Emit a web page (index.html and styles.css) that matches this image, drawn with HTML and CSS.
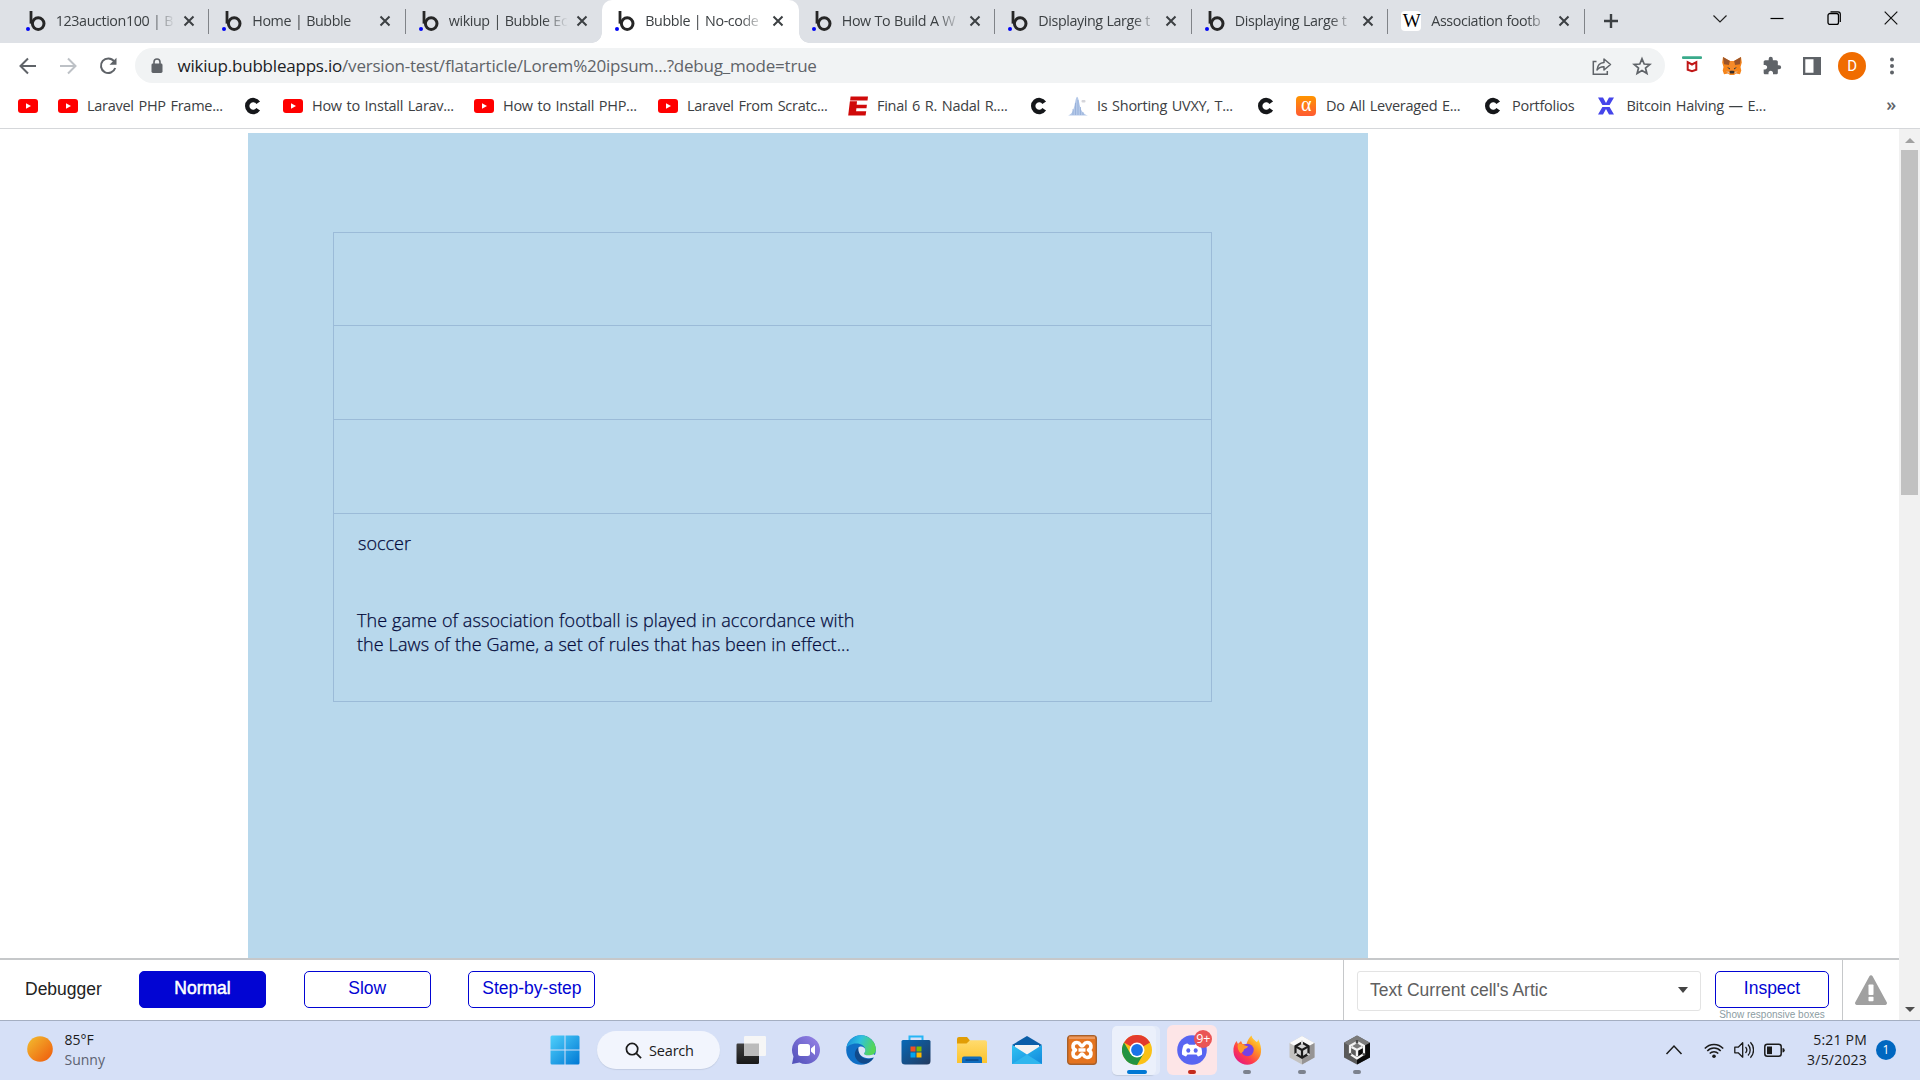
FILE: index.html
```html
<!DOCTYPE html>
<html lang="en">
<head>
<meta charset="utf-8">
<title>Bubble | No-code apps</title>
<link rel="stylesheet" href="styles.css">
</head>
<body>
<svg class="defs" width="0" height="0" aria-hidden="true">
  <defs>
    <symbol id="bubble" viewBox="0 0 20 20"><circle cx="12.2" cy="12.6" r="5.8" fill="none" stroke="#262626" stroke-width="3"/><path d="M5 0v12.6" stroke="#262626" stroke-width="2.8"/><circle cx="2" cy="18" r="2" fill="#0205f5"/></symbol>
    <symbol id="x" viewBox="0 0 12 12"><path d="M1.5 1.5l9 9M10.5 1.5l-9 9" stroke="#3c4043" stroke-width="2"/></symbol>
    <symbol id="yt" viewBox="0 0 20 20"><rect y="3" width="20" height="14" rx="3" fill="#f00"/><path d="M8 7.2v5.6l5-2.8z" fill="#fff"/></symbol>
    <symbol id="c" viewBox="0 0 20 20"><path d="M15.2 6.7A6 6 0 1 0 15.2 13.3" fill="none" stroke="#15171a" stroke-width="4.4"/></symbol>
    <linearGradient id="gwin" x2="1" y2="1"><stop stop-color="#4fd0fb"/><stop offset="1" stop-color="#0078d4"/></linearGradient>
    <linearGradient id="gsun" x2="1" y2="1"><stop stop-color="#f2bf30"/><stop offset=".75" stop-color="#f07114"/><stop offset="1" stop-color="#ee5a0c"/></linearGradient>
    <linearGradient id="gtv" x2="0" y2="1"><stop stop-color="#404040"/><stop offset="1" stop-color="#181818"/></linearGradient>
    <linearGradient id="gchat" x1="1" x2="0" y2="1"><stop stop-color="#9a85e8"/><stop offset="1" stop-color="#4e4fb8"/></linearGradient>
    <linearGradient id="gedge" x2="1" y2=".3"><stop stop-color="#1583dc"/><stop offset=".5" stop-color="#2fc1df"/><stop offset="1" stop-color="#55d658"/></linearGradient>
    <linearGradient id="gstore" x2="1" y2="1"><stop stop-color="#0669b8"/><stop offset="1" stop-color="#243a5e"/></linearGradient>
    <linearGradient id="gfold" x2="0" y2="1"><stop stop-color="#ffdb6e"/><stop offset="1" stop-color="#fcc32c"/></linearGradient>
    <linearGradient id="gmail" x2="1" y2="1"><stop stop-color="#31c3f3"/><stop offset="1" stop-color="#1289dc"/></linearGradient>
    <linearGradient id="gfox" x1="1" x2=".2" y2="1"><stop stop-color="#fff44f"/><stop offset=".35" stop-color="#ffa023"/><stop offset=".7" stop-color="#ff3d4a"/><stop offset="1" stop-color="#e31587"/></linearGradient>
  </defs>
</svg>

<header class="tabstrip">
  <div class="tab"><svg class="fav"><use href="#bubble"/></svg><span class="title">123auction100 | B</span><svg class="close"><use href="#x"/></svg></div>
  <div class="tab"><svg class="fav"><use href="#bubble"/></svg><span class="title">Home | Bubble</span><svg class="close"><use href="#x"/></svg></div>
  <div class="tab no-sep"><svg class="fav"><use href="#bubble"/></svg><span class="title">wikiup | Bubble Ec</span><svg class="close"><use href="#x"/></svg></div>
  <div class="tab active"><svg class="fav"><use href="#bubble"/></svg><span class="title">Bubble | No-code</span><svg class="close"><use href="#x"/></svg></div>
  <div class="tab"><svg class="fav"><use href="#bubble"/></svg><span class="title">How To Build A W</span><svg class="close"><use href="#x"/></svg></div>
  <div class="tab"><svg class="fav"><use href="#bubble"/></svg><span class="title">Displaying Large t</span><svg class="close"><use href="#x"/></svg></div>
  <div class="tab"><svg class="fav"><use href="#bubble"/></svg><span class="title">Displaying Large t</span><svg class="close"><use href="#x"/></svg></div>
  <div class="tab"><span class="fav wiki">W</span><span class="title">Association footb</span><svg class="close"><use href="#x"/></svg></div>
  <svg class="newtab" viewBox="0 0 16 16"><path d="M8 1v14M1 8h14" stroke="#3c4043" stroke-width="2.4"/></svg>
  <div class="wincontrols">
    <svg viewBox="0 0 14 14"><path d="M.5 4.5L7 11l6.500-6.500" fill="none" stroke="#222" stroke-width="1.2"/></svg>
    <svg viewBox="0 0 14 14"><path d="M.5 7.500h13" stroke="#000" stroke-width="1.2"/></svg>
    <svg viewBox="0 0 14 14"><rect x="1" y="2.500" width="10.500" height="11" rx="2" fill="none" stroke="#000" stroke-width="1.3"/><path d="M3.500 .8H11a2.300 2.300 0 0 1 2.300 2.300V11" fill="none" stroke="#000" stroke-width="1.200"/></svg>
    <svg viewBox="0 0 14 14"><path d="M.7.7l12.600 12.600M13.300.7L.7 13.300" stroke="#111" stroke-width="1.200"/></svg>
  </div>
</header>

<div class="toolbar">
  <svg class="nav" viewBox="0 0 18 18"><path d="M17 9H2M9 1.500L1.500 9 9 16.500" fill="none" stroke="#5f6368" stroke-width="2"/></svg>
  <svg class="nav" viewBox="0 0 18 18"><path d="M1 9h15M9 1.500L16.500 9 9 16.500" fill="none" stroke="#bdc1c6" stroke-width="2"/></svg>
  <svg class="nav" viewBox="0 0 18 18"><path d="M15 4.200A7.300 7.300 0 1 0 16.200 11" fill="none" stroke="#5f6368" stroke-width="2"/><path d="M17.500.8v7h-7z" fill="#5f6368"/></svg>
  <div class="omnibox">
    <svg class="lock" viewBox="0 0 12 16"><rect x=".5" y="5.500" width="11" height="9.500" rx="1.400" fill="#5f6368"/><path d="M3 6V4a3 3 0 0 1 6 0v2" fill="none" stroke="#5f6368" stroke-width="1.600"/></svg>
    <span class="url"><b>wikiup.bubbleapps.io</b>/version-test/flatarticle/Lorem%20ipsum...?debug_mode=true</span>
    <svg class="obi" viewBox="0 0 20 20"><path d="M4.500 5.500H1.300v12.700h14V15" fill="none" stroke="#5f6368" stroke-width="1.500"/><path d="M5 14c.5-5 3-7.300 7-7.500V3l6.500 5.500L12 14v-3.300c-3-.1-5.200.8-7 3.300z" fill="none" stroke="#5f6368" stroke-width="1.500" stroke-linejoin="round"/></svg>
    <svg class="obi" viewBox="0 0 20 20"><path d="M10 2.800l2.200 5.200 5.600.4-4.300 3.600 1.400 5.500L10 14.500l-4.900 3 1.400-5.500-4.300-3.600L7.800 8z" fill="none" stroke="#5f6368" stroke-width="1.700"/></svg>
  </div>
  <div class="exts">
    <svg viewBox="0 0 20 20"><rect width="20" height="2.800" y=".2" rx="1" fill="#3aaa8b"/><path d="M5.700 6.200L10 8.500l4.300-2.300v7.600L10 15.300l-4.300-1.500z" fill="none" stroke="#c01818" stroke-width="2"/></svg>
    <svg viewBox="0 0 20 20"><path d="M1 1l7 4h4l7-4 .8 5.500L18.500 11l.8 3.500-1.300 3.800-4-.9-2 1.600H8l-2-1.600-4 .9-1.300-3.800.8-3.500L.2 6.500z" fill="#f6851b"/><path d="M1 1l7 4-1 4-5-.8zM19 1l-7 4 1 4 5-.8z" fill="#9b5429"/><path d="M8 5h4l1 6-1 4H8l-1-4z" fill="#f58b2b"/><path d="M5 11l3 1.200-.4 1.300zM15 11l-3 1.200.4 1.300z" fill="#233447"/><path d="M7.500 15.500l1-.8h3l1 .8-.7 2H8.200z" fill="#39302c"/><path d="M4 15.500l3 .2.500 2zM16 15.500l-3 .2-.5 2z" fill="#d7c1b3"/></svg>
    <svg viewBox="0 0 24 24"><path fill="#5f6368" d="M20.500 11H19V7c0-1.100-.9-2-2-2h-4V3.500a2.500 2.500 0 0 0-5 0V5H4c-1.100 0-1.990.9-1.990 2v3.800H3.500c1.490 0 2.700 1.210 2.700 2.700s-1.210 2.700-2.700 2.700H2V20c0 1.100.9 2 2 2h3.800v-1.500c0-1.490 1.210-2.700 2.700-2.700s2.700 1.210 2.700 2.700V22H17c1.100 0 2-.9 2-2v-4h1.500a2.500 2.500 0 0 0 0-5z"/></svg>
    <svg viewBox="0 0 20 20"><path fill="#5f6368" fill-rule="evenodd" d="M1 1h18v18H1zM3.300 3.300v13.400h8.200V3.300z"/></svg>
    <span class="avatar">D</span>
    <svg viewBox="0 0 20 20"><circle cx="10" cy="3.500" r="2" fill="#5f6368"/><circle cx="10" cy="10" r="2" fill="#5f6368"/><circle cx="10" cy="16.500" r="2" fill="#5f6368"/></svg>
  </div>
</div>

<nav class="bookmarks">
  <div class="bm"><svg><use href="#yt"/></svg></div>
  <div class="bm"><svg><use href="#yt"/></svg><span>Laravel PHP Frame...</span></div>
  <div class="bm"><svg><use href="#c"/></svg></div>
  <div class="bm"><svg><use href="#yt"/></svg><span>How to Install Larav...</span></div>
  <div class="bm"><svg><use href="#yt"/></svg><span>How to Install PHP...</span></div>
  <div class="bm"><svg><use href="#yt"/></svg><span>Laravel From Scratc...</span></div>
  <div class="bm"><svg viewBox="0 0 20 20"><path d="M2.600.5H20l-.5 4H2.100zM1.900 5.300H9l-.3 3.500h10.200l-.4 3.500H8.400l-.3 2.900h10.100l-.6 4.300H.2z" fill="#d00a0a"/></svg><span>Final 6 R. Nadal R....</span></div>
  <div class="bm"><svg><use href="#c"/></svg></div>
  <div class="bm"><svg viewBox="0 0 20 20"><path d="M0 19.500c3.500-1 5-4 6.500-10C7.300 5.500 8 1.500 9 .8c1.200 0 2 5 3 9.500 1.200 5 3.500 8 8 9.200z" fill="#b4c8e8"/><path d="M5 13v6M7.500 7v12M10 4v15M12.500 11v8M15 16v3" stroke="#8ea9d6" stroke-width=".7"/><rect x="13.500" y="4" width="4" height="2.500" rx="1" fill="#d5d5da"/></svg><span>Is Shorting UVXY, T...</span></div>
  <div class="bm"><svg><use href="#c"/></svg></div>
  <div class="bm wide"><span class="alpha">α</span><span>Do All Leveraged E...</span></div>
  <div class="bm"><svg><use href="#c"/></svg><span>Portfolios</span></div>
  <div class="bm last"><svg viewBox="0 0 20 20"><path d="M2 1.500h5L10 7l3-5.500h5L13.600 9H6.400zM2 18.500h5L10 13l3 5.500h5L13.600 11H6.400z" fill="#4545ea"/></svg><span>Bitcoin Halving — E...</span></div>
  <span class="more">»</span>
</nav>

<main class="viewport">
  <div class="page">
    <div class="canvas">
      <div class="group">
        <div class="cell"></div>
        <div class="cell"></div>
        <div class="cell"></div>
        <div class="cell article">
          <div class="name">soccer</div>
          <div class="body">The game of association football is played in accordance with<br>the Laws of the Game, a set of rules that has been in effect...</div>
        </div>
      </div>
    </div>
    <footer class="debugger">
      <span class="label">Debugger</span>
      <button class="btn on">Normal</button>
      <button class="btn">Slow</button>
      <button class="btn">Step-by-step</button>
      <div class="inspector">
        <div class="select"><span>Text Current cell's Artic</span><i></i></div>
        <div class="inspect"><button class="btn">Inspect</button><small>Show responsive boxes</small></div>
      </div>
      <div class="warn"><svg viewBox="0 0 32 30"><path d="M14.400 1.200a1.900 1.900 0 0 1 3.200 0L31.600 27a1.900 1.900 0 0 1-1.600 3H2a1.900 1.900 0 0 1-1.600-3z" fill="#a0a0a0"/><rect x="13.500" y="9.500" width="5" height="10.500" rx=".8" fill="#fff"/><rect x="13.500" y="21.800" width="5" height="4.400" rx=".8" fill="#fff"/></svg></div>
    </footer>
  </div>
  <div class="scrollbar"><i class="up"></i><div class="thumb"></div><i class="down"></i></div>
</main>

<footer class="taskbar">
  <div class="weather">
    <svg viewBox="0 0 26 26"><circle cx="13" cy="13" r="12.800" fill="url(#gsun)"/></svg>
    <div>85°F<br><span class="dim">Sunny</span></div>
  </div>
  <div class="apps">
    <div class="app first"><svg viewBox="0 0 30 30"><path d="M.5 2q0-1.500 1.500-1.500h12.500v14H.5zM15.500.5H28q1.500 0 1.500 1.500v12.500h-14zM.5 15.500h14v14H2q-1.500 0-1.500-1.500zM15.500 15.500h14V28q0 1.500-1.500 1.500H15.500z" fill="url(#gwin)"/></svg></div>
    <div class="search"><svg viewBox="0 0 18 18"><circle cx="7.500" cy="7.500" r="6" fill="none" stroke="#1b1b1b" stroke-width="1.800"/><path d="M12 12l5 5" stroke="#1b1b1b" stroke-width="1.900"/></svg><span>Search</span></div>
    <div class="app"><svg viewBox="0 0 30 30"><rect x=".5" y="8.500" width="22.500" height="20.500" rx="1.200" fill="url(#gtv)"/><rect x="8" y="1" width="22" height="20" rx="1.200" fill="#f6f6f6"/><rect x="8" y="8.500" width="15" height="12.500" fill="#bbb"/></svg></div>
    <div class="app"><svg viewBox="0 0 30 30"><path d="M15 1a14 14 0 1 1-6.500 26.400L1 29l1.500-7.600A14 14 0 0 1 15 1z" fill="url(#gchat)"/><rect x="7" y="9" width="12" height="12" rx="2.500" fill="#fff"/><path d="M20 13.500l4-3.500v10l-4-3.500z" fill="#fff"/></svg></div>
    <div class="app"><svg viewBox="0 0 30 30"><circle cx="15" cy="15" r="14.800" fill="#0f6fc6"/><path d="M.3 13A14.900 14.900 0 0 1 29.900 14c.3 4-3 6.800-7.500 6.800-3 0-4.400-1-4.400-2 0-.8 1.300-1.500 1.300-3.800C19.300 11 15 8.500 10.500 8.500 5 8.500 1.500 11 .3 13z" fill="url(#gedge)"/><path d="M12.500 12.300c-3.500 2.500-4.700 7-2.700 11 2.200 4.300 7 6.500 11.200 5 3-1.200 5.200-3 6.700-5.500-7 3-15.500 1-15.200-10.500z" fill="#114a8b"/><path d="M12.500 12.500c-1 7 4.500 11.500 11 10.800 2.500-.2 4.200-1 5-1l1.800-2-3-1c-2 1-8.300 1.800-9.300-.5.200-1 1.300-1.500 1.300-3.800 0-3.200-5-4.800-6.800-2.500z" fill="#dbe4f7"/></svg></div>
    <div class="app"><svg viewBox="0 0 30 30"><path d="M8.500 7V1.500h13V7" fill="none" stroke="#27b5f5" stroke-width="2"/><path d="M.5 6.500q0-1.500 1.500-1.500h26q1.500 0 1.500 1.500V26a3.500 3.500 0 0 1-3.500 3.500H4A3.500 3.500 0 0 1 .5 26z" fill="url(#gstore)"/><path d="M9.500 11.500h5v5h-5z" fill="#f25022"/><path d="M15.500 11.500h5v5h-5z" fill="#7fba00"/><path d="M9.500 17.500h5v5h-5z" fill="#00a4ef"/><path d="M15.500 17.500h5v5h-5z" fill="#ffb900"/></svg></div>
    <div class="app"><svg viewBox="0 0 30 30"><path d="M0 4q0-2 2-2h8l3 3.500V12H0z" fill="#e19d05"/><path d="M0 8.500h9.500L13 5.200h15q2 0 2 2V28H0z" fill="url(#gfold)"/><path d="M5 28v-4.500Q5 21.500 7 21.500h16q2 0 2 2V28z" fill="#0f6cbd"/><path d="M8.500 25h13" stroke="#0a3f78" stroke-width="1.200"/></svg></div>
    <div class="app"><svg viewBox="0 0 30 30"><path d="M0 10L15 1l15 9-15 9z" fill="#0b5ea8"/><path d="M3 10h24v7L15 22 3 17z" fill="#f3f3f3"/><path d="M0 10l15 9.500L30 10v19H0z" fill="url(#gmail)"/><path d="M15 19.500L30 29H0z" fill="#2fb6ee"/></svg></div>
    <div class="app"><svg viewBox="0 0 30 30"><rect x=".7" y=".7" width="28.600" height="28.600" rx="3" fill="#e4731f" stroke="#a9602a" stroke-width="1.400"/><path d="M2 1.500h26V4H2z" fill="#f0a878" opacity=".7"/><path d="M10 7.500c-5 0-5 6-1.500 7.500C5 16.500 5 22.500 10 22.500c3.500 0 3-3.500 5-3.500s1.500 3.500 5 3.500c5 0 5-6 1.500-7.500 3.500-1.500 3.500-7.500-1.500-7.500-3.500 0-3 3.500-5 3.500s-1.500-3.500-5-3.500zM11.500 15h7" fill="none" stroke="#fff" stroke-width="3.600" stroke-linejoin="round"/></svg></div>
    <div class="app current"><svg viewBox="0 0 30 30"><circle cx="15" cy="15" r="15" fill="#fbc116"/><path d="M15 15L2 7.500A15 15 0 0 1 28 7.500z" fill="#e33b2e"/><path d="M2 7.500A15 15 0 0 0 15 30l6.500-11.300L15 15 8.500 18.800z" fill="#229342"/><path d="M28 7.500H15v4z" fill="#e33b2e"/><circle cx="15" cy="15" r="7.500" fill="#fff"/><circle cx="15" cy="15" r="5.900" fill="#1a73e8"/></svg><i></i></div>
    <div class="app alert"><svg viewBox="0 0 30 30"><circle cx="15" cy="15" r="14.800" fill="#5865f2"/><path d="M10.500 8.500l1.700 1.200h5.600l1.700-1.200c2 .4 3 1 3.800 1.600 1.500 3.500 2 6.500 1.700 9.500-1.500 1.100-3 1.700-4 1.900l-1.500-1.900h-9L9 21.500c-1-.2-2.500-.8-4-1.900-.3-3 .2-6 1.700-9.500.8-.6 1.800-1.200 3.800-1.600z" fill="#fff"/><ellipse cx="11.300" cy="15.500" rx="2" ry="2.200" fill="#5865f2"/><ellipse cx="18.700" cy="15.500" rx="2" ry="2.200" fill="#5865f2"/></svg><b>9+</b><i></i></div>
    <div class="app run"><svg viewBox="0 0 30 30"><path d="M1.500 17C1 12 2.500 9 4.500 6l1.500 3 3-3 1.500 3h4c1-4 3-6.500 5-8.500.5 3 2.500 4 5 6.500 1.500-.5 1.500-1.500 1.500-3C28.500 9 29.500 13 29 17a13.800 13.800 0 0 1-27.500 0z" fill="url(#gfox)"/><circle cx="15.500" cy="15" r="6.200" fill="#7542e5"/><path d="M6 9c3-1 5 .5 7 1.500l3 .8c-.5 2-3 2.200-4 3.200-.8 3-2 2.500-3 4C6 16 5 12 6 9z" fill="#ff9a2a"/></svg><i></i></div>
    <div class="app run"><svg viewBox="0 0 30 30"><path d="M15 1l12.500 7v14.500L15 29.500 2.500 22.500V8z" fill="#c3c2c0"/><path d="M15 1l12.500 7L15 15 2.500 8z" fill="#fafafa"/><path d="M27.500 8v14.500L15 29.500V15z" fill="#969494"/><path d="M15 7.500l6.500 3.700v7.600L15 22.700l-6.500-3.900v-7.600z" fill="#d5d5d5" stroke="#1c1c1c" stroke-width="2.200"/><path d="M15 15v7M15 15l-6-3.400M15 15l6-3.400" stroke="#1c1c1c" stroke-width="2.200"/><path d="M15 5.500v3.500M7.500 20l2.300-1.400M22.500 20l-2.300-1.400" stroke="#d5d5d5" stroke-width="2"/></svg><i></i></div>
    <div class="app run"><svg viewBox="0 0 30 30"><path d="M15 .5l13 7.300v14.700L15 29.500 2 22.500V7.800z" fill="#5a5a5a"/><path d="M15 .5l13 7.300L15 15 2 7.800z" fill="#7a7a7a"/><path d="M28 7.800v14.700L15 29.500V15z" fill="#0a0a0a"/><path d="M15 7l7 4v8L15 23.500 8 19v-8z" fill="none" stroke="#f4f4f4" stroke-width="2.200"/><path d="M15 15v6.500M15 15l-5.500-3M15 15l5.500-3" stroke="#f4f4f4" stroke-width="2.400"/><path d="M15 5v3.500M7 20l2-1.200M23 20l-2-1.200" stroke="#4a4a4a" stroke-width="2.400"/></svg><i></i></div>
  </div>
  <div class="tray">
    <svg class="chev" viewBox="0 0 18 20"><path d="M1.500 14L9 6l7.500 8" fill="none" stroke="#1b1b1b" stroke-width="1.500"/></svg>
    <svg class="wifi" viewBox="0 0 20 20"><g fill="none" stroke="#1b1b1b" stroke-width="1.500"><path d="M.8 8.500a12.500 12.500 0 0 1 18.400 0M3.300 11a9 9 0 0 1 13.400 0M5.700 13.600a6 6 0 0 1 8.600 0"/></g><circle cx="10" cy="16.200" r="1.800" fill="#1b1b1b"/></svg>
    <svg class="vol" viewBox="0 0 20 20"><g fill="none" stroke="#1b1b1b" stroke-width="1.300" stroke-linejoin="round"><path d="M.8 7.200h3.400l4.500-4.400v14.400l-4.500-4.400H.8z"/><path d="M11.500 7a4.500 4.500 0 0 1 0 6M14 4.500a8 8 0 0 1 0 11M16.400 2.300a11 11 0 0 1 0 15.400"/></g></svg>
    <svg class="bat" viewBox="0 0 21 20"><rect x=".8" y="4.300" width="16.400" height="12" rx="2.500" fill="none" stroke="#1b1b1b" stroke-width="1.500"/><rect x="3" y="6.500" width="5" height="7.600" fill="#1b1b1b"/><path d="M18.500 8q2.200 0 2.200 2.300t-2.200 2.300z" fill="#1b1b1b"/></svg>
    <div class="clock">5:21 PM<br>3/5/2023</div>
    <span class="count">1</span>
  </div>
</footer>
</body>
</html>
```
FILE: styles.css
```css
* { box-sizing: border-box; }
body { margin: 0; width: 1920px; height: 1080px; overflow: hidden; display: flex; flex-direction: column; background: #fff; font-family: "Open Sans", "Noto Sans", sans-serif; color: #3c4043; white-space: nowrap; }
svg { display: block; flex: none; }
.defs { position: absolute; }

.tabstrip { height: 43px; flex: none; display: flex; background: #dee1e6; padding-left: 12.5px; }
.tab { width: 196.5px; flex: none; display: flex; align-items: center; padding: 0 14.3px 2px 13.2px; position: relative; }
.tab::after { content: ""; position: absolute; right: 0; top: 9px; width: 1px; height: 25px; background: #808388; }
.tab.no-sep::after { display: none; }
.tab.active { background: #fff; border-radius: 10px 10px 0 0; }
.tab.active::before, .tab.active::after { content: ""; position: absolute; top: auto; bottom: 0; width: 10px; height: 10px; background: radial-gradient(circle at 0 0, transparent 9.5px, #fff 10px); left: -10px; }
.tab.active::after { left: auto; right: -10px; background: radial-gradient(circle at 100% 0, transparent 9.5px, #fff 10px); }
.fav { width: 20px; height: 20px; }
.wiki { background: #fff; border-radius: 4px; color: #000; font: 19px/20px "Liberation Serif", serif; text-align: center; letter-spacing: -1px; flex: none; }
.title { margin-left: 10.1px; width: 119px; font-size: 14.3px; letter-spacing: -.4px; word-spacing: .5px; line-height: 20px; -webkit-mask-image: linear-gradient(90deg, #000 80%, transparent 100%); mask-image: linear-gradient(90deg, #000 80%, transparent 100%); }
.close { width: 12px; height: 12px; margin-left: auto; }
.newtab { width: 16px; height: 16px; margin: 13px 0 0 18.5px; }
.wincontrols { margin: 11px 22px 0 auto; display: flex; gap: 43px; }
.wincontrols svg { width: 14px; height: 14px; }

.toolbar { height: 45px; flex: none; display: flex; align-items: center; padding-left: 18.5px; }
.nav { width: 18px; height: 18px; margin-right: 22px; }
.omnibox { width: 1530px; height: 35px; margin-left: -3.3px; background: #f1f3f4; border-radius: 18px; display: flex; align-items: center; padding: 0 12.8px 0 16px; }
.lock { width: 12px; height: 16px; }
.url { margin: 0 auto 0 14.3px; font-size: 17px; line-height: 24px; letter-spacing: -.21px; color: #5f6368; }
.url b { font-weight: 400; color: #202124; }
.obi { width: 20px; height: 20px; margin-left: 20px; }
.exts { display: flex; align-items: center; gap: 20px; margin-left: 17px; }
.exts svg { width: 20px; height: 20px; }
.avatar { width: 28px; height: 28px; margin: 0 -4px; border-radius: 50%; background: #f06c00; color: #fff; font: 15px/28px Roboto, sans-serif; text-align: center; }

.bookmarks { height: 41px; flex: none; border-bottom: 1px solid #d5d7da; display: grid; grid-template-columns: 40px 185px 40px 191px 184px 190px 181px 39px 188px 40px 187px 113px 1fr auto; padding: 0 24px 4px 18px; align-items: center; font-size: 14.5px; letter-spacing: -.27px; word-spacing: 1.2px; line-height: 20px; }
.bm { display: flex; align-items: center; gap: 9px; }
.bm svg { width: 20px; height: 20px; }
.bm.wide { gap: 10px; }
.bm.last { gap: 10.5px; }
.alpha { width: 20px; height: 20px; flex: none; border-radius: 4px; background: linear-gradient(#ff9500, #ff5a32); color: #fff; font: 20px/17px "Liberation Serif", serif; text-align: center; }
.more { font-size: 18px; font-weight: 600; color: #5f6368; margin-top: -4px; }

.viewport { flex: 1; min-height: 0; display: flex; }
.page { width: 1899px; display: flex; flex-direction: column; }
.canvas { margin: 4px 0 0 248px; width: 1120px; flex: 1; background: #b8d8ec; padding: 99px 0 0 85px; }
.group { width: 879px; border: 1px solid #9bbbd8; border-top: 0; }
.cell { height: 94px; border-top: 1px solid #9bbbd8; }
.cell:first-child { height: 93px; }
.article { height: 188px; padding: 17px 0 0 23px; color: #040b3c; font-size: 18px; font-weight: 300; -webkit-text-stroke: .25px #040b3c; line-height: 24px; }
.name { padding-left: 1px; height: 77px; }
.body { letter-spacing: .1px; }
.debugger { height: 62px; flex: none; border-top: 2px solid #c6c8ca; display: flex; align-items: stretch; font-family: "Liberation Sans", Arial, sans-serif; font-size: 17.5px; padding-left: 25px; background: #fff; }
.label { width: 114px; padding-top: 18px; line-height: 22px; color: #222; }
.btn { width: 127px; height: 37px; margin: 11px 37.7px 0 0; padding: 0 0 3px; border: 1.5px solid #0205d3; border-radius: 5px; background: #fff; color: #0205d3; font: inherit; }
.btn.on { background: #0205d3; color: #fff; -webkit-text-stroke: .5px #fff; }
.inspector { margin-left: auto; width: 499px; border-left: 1px solid #c6c8ca; display: flex; padding: 11px 0 0 13px; gap: 14px; }
.select { width: 344px; height: 40px; border: 1px solid #e3e3e3; border-radius: 3px; display: flex; align-items: center; justify-content: space-between; padding: 0 12px 2px 12px; color: #606060; }
.select i { border: 5.5px solid transparent; border-top: 6px solid #444; border-bottom: 0; }
.inspect { width: 114px; text-align: center; }
.inspect .btn { width: 114px; margin: 0; display: block; }
.inspect small { display: block; font-size: 10px; line-height: 14px; color: #8c9ca2; }
.warn { width: 57px; border-left: 1px solid #c6c8ca; padding: 15px 0 0 12px; }
.warn svg { width: 32px; height: 30px; }
.scrollbar { width: 21px; background: #f1f1f1; display: flex; flex-direction: column; align-items: center; padding: 9px 0 8px; }
.scrollbar i { border: 5px solid transparent; }
.scrollbar .up { border-bottom: 5px solid #a0a0a0; border-top: 0; }
.scrollbar .down { border-top: 5px solid #505050; border-bottom: 0; margin-top: auto; }
.thumb { width: 17px; height: 345px; margin-top: 7px; background: #c1c1c1; }

.taskbar { height: 60px; flex: none; border-top: 1px solid #a5afc2; background: #d6e0f7; display: flex; color: #1b1b1b; font-size: 14px; line-height: 20px; }
.weather { width: 537px; display: flex; padding: 9px 0 0 27px; gap: 11.5px; }
.weather svg { width: 26px; height: 26px; margin-top: 6px; }
.dim { color: #5c6270; }
.apps { display: flex; }
.app { width: 55.1px; height: 59px; position: relative; display: flex; align-items: center; justify-content: center; padding-bottom: 1px; }
.app svg { width: 30px; height: 30px; position: relative; }
.app i { position: absolute; bottom: 6px; left: 50%; width: 8px; height: 4px; margin-left: -4px; border-radius: 2px; background: #7c828e; }
.search { width: 123px; height: 38px; margin: 10px 3.5px 0 5px; border-radius: 19px; background: #f2f5fd; box-shadow: 0 1px 1px #c3cde3; display: flex; align-items: center; padding: 1px 0 0 28px; gap: 7px; font-size: 14.5px; letter-spacing: -.2px; }
.search svg { width: 17px; height: 17px; }
.current::before { content: ""; position: absolute; left: 3px; top: 5px; width: 44px; height: 49px; border-radius: 5px; background: #ebf0fb; box-shadow: 4px 0 0 #e3eaf9, 0 1px 1px #c0cadd; }
.current i { width: 20px; margin-left: -10px; background: #0078d4; }
.alert::before { content: ""; position: absolute; left: 2.5px; top: 4px; width: 50px; height: 50px; border-radius: 6px; background: #fde5e7; }
.alert i { background: #c42b1c; }
.alert b { position: absolute; left: 30px; top: 9px; width: 18px; height: 18px; border-radius: 50%; background: #ea5455; color: #fff; font: 12.5px/17px "Open Sans", sans-serif; text-align: center; }
.tray { margin-left: auto; display: flex; align-items: center; padding: 0 24px 2px 0; }
.chev { width: 18px; height: 20px; margin-right: 21px; }
.wifi { width: 20px; height: 20px; margin-right: 10px; }
.vol { width: 20px; height: 20px; margin-right: 10px; }
.bat { width: 21px; height: 20px; }
.clock { width: 82px; text-align: right; letter-spacing: .2px; }
.count { width: 20px; height: 20px; margin-left: 9px; border-radius: 50%; background: #0067c0; color: #fff; font-size: 12px; text-align: center; }
```
